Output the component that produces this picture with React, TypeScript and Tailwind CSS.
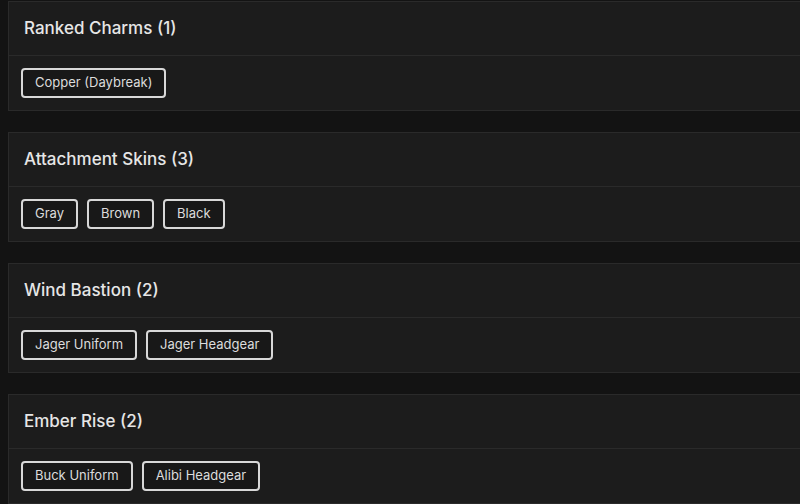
const sections = [
  { title: 'Ranked Charms', items: ['Copper (Daybreak)'] },
  { title: 'Attachment Skins', items: ['Gray', 'Brown', 'Black'] },
  { title: 'Wind Bastion', items: ['Jager Uniform', 'Jager Headgear'] },
  { title: 'Ember Rise', items: ['Buck Uniform', 'Alibi Headgear'] },
]

export default function App() {
  return (
    <div
      className="min-h-screen overflow-hidden bg-[#131313] pl-2 pt-[1px]"
      style={{ fontFamily: 'Inter, "Noto Sans", sans-serif' }}
    >
      <div className="flex w-[820px] flex-col gap-[21px]">
        {sections.map((s) => (
          <Section key={s.title} title={s.title} items={s.items} />
        ))}
      </div>
    </div>
  )
}

function Section({ title, items }: { title: string; items: string[] }) {
  return (
    <section className="border border-[#2a2a2a] bg-[#1c1c1c]">
      <div className="flex h-[54px] items-center border-b border-[#2a2a2a] px-[15px]">
        <h2 className="text-[17px] font-medium text-[#e6e6e6]">
          {title} ({items.length})
        </h2>
      </div>
      <div className="flex gap-[9px] px-[12px] pb-[12px] pt-[12px]">
        {items.map((item) => (
          <span
            key={item}
            className="flex h-[30px] items-center rounded-[4px] border-2 border-[#d8d8d8] bg-[#181818] px-[12px] text-[13px] text-[#dcdcdc]"
          >
            {item}
          </span>
        ))}
      </div>
    </section>
  )
}
